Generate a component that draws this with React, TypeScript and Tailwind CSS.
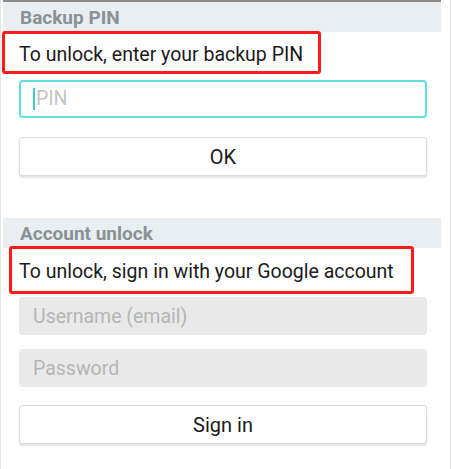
import React from 'react';

const font = { fontFamily: 'Roboto, "Noto Sans", sans-serif' };

const Header = ({ title }: { title: string }) => (
  <div className="h-[30px] w-[438px] bg-[#e8eef1] flex items-center pl-[17px] pt-[3px] text-[19px] font-bold text-[#8a9194]">
    {title}
  </div>
);

export default function App() {
  return (
    <div className="relative w-[452px] h-[469px] bg-white overflow-hidden" style={font}>
      <div className="h-full w-[451px] border-l border-r border-[#e4e4e4] pl-[2px] pt-0">
        <div className="h-[2px] w-[438px] bg-[#8c8c8c]" />
        <Header title="Backup PIN" />
        <div className="h-[41px] flex items-center pl-[16px] pt-[5px] text-[19.5px] text-[#1a1a1a]">
          To unlock, enter your backup PIN
        </div>
        <div className="ml-[16px] mt-[7px] w-[408px] flex flex-col gap-[19px]">
          <div className="h-[38px] rounded-[4px] border-2 border-[#62dde0] flex items-center pl-[12px]">
            <span className="w-[2px] h-[22px] bg-[#3ccdd2] mr-[1px]" />
            <span className="text-[19.5px] text-[#c4c4c4]">PIN</span>
          </div>
          <button className="h-[39px] rounded-[3px] border border-[#dcdcdc] bg-white shadow-[0_2px_2px_rgba(0,0,0,0.12)] text-[20px] text-[#1a1a1a]">
            OK
          </button>
        </div>
        <div className="mt-[42px]">
          <Header title="Account unlock" />
        </div>
        <div className="h-[45px] flex items-center pl-[16px] pt-[2px] text-[19.5px] text-[#1a1a1a]">
          To unlock, sign in with your Google account
        </div>
        <div className="ml-[16px] mt-[4px] w-[408px] flex flex-col">
          <div className="h-[38px] rounded-[4px] bg-[#e9e9e9] flex items-center pl-[14px] pt-[2px] text-[19.5px] text-[#b5b5b5]">
            Username (email)
          </div>
          <div className="mt-[14px] h-[38px] rounded-[4px] bg-[#e9e9e9] flex items-center pl-[14px] pt-[2px] text-[19.5px] text-[#b5b5b5]">
            Password
          </div>
          <button className="mt-[18px] h-[39px] rounded-[3px] border border-[#dcdcdc] bg-white shadow-[0_2px_2px_rgba(0,0,0,0.12)] text-[20px] text-[#1a1a1a]">
            Sign in
          </button>
        </div>
      </div>
      <div className="absolute left-[2px] top-[31px] w-[319px] h-[43px] border-[3px] border-[#ff1a1a] rounded-[3px]" />
      <div className="absolute left-[9px] top-[246px] w-[405px] h-[48px] border-[3px] border-[#ff1a1a] rounded-[3px]" />
    </div>
  );
}
